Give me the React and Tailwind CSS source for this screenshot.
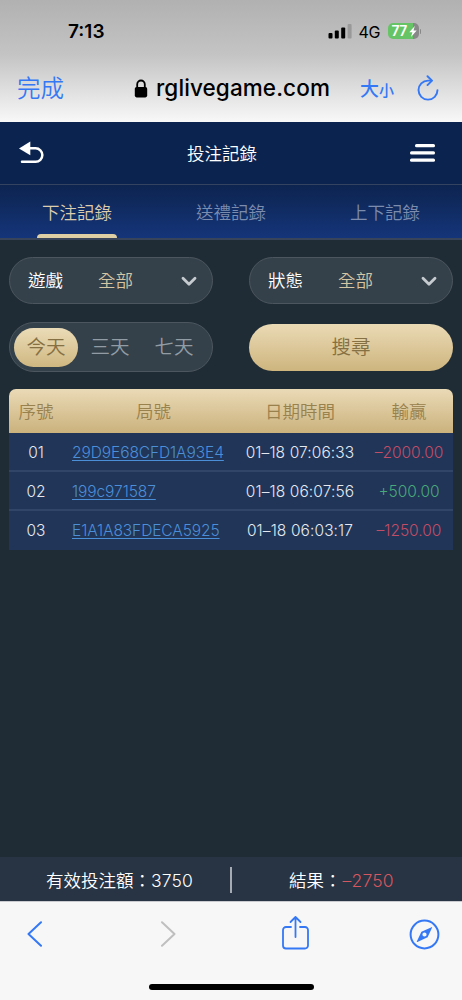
import React, { useState } from "react";

const tabs = ["下注記錄", "送禮記錄", "上下記錄"];
const ranges = ["今天", "三天", "七天"];

const records = [
  { no: "01", round: "29D9E68CFD1A93E4", time: "01–18 07:06:33", amount: "–2000.00", win: false },
  { no: "02", round: "199c971587", time: "01–18 06:07:56", amount: "+500.00", win: true },
  { no: "03", round: "E1A1A83FDECA5925", time: "01–18 06:03:17", amount: "–1250.00", win: false },
];

function StatusBar() {
  return (
    <div className="h-[62px] flex items-center pl-[68px] pr-[41px] text-black">
      <span className="text-[19px] font-semibold leading-none">7:13</span>
      <svg className="ml-auto" width="24" height="16" viewBox="0 0 24 16">
        <rect x="0.5" y="10" width="4" height="5.5" rx="1" />
        <rect x="6.8" y="7.5" width="4" height="8" rx="1" />
        <rect x="13.2" y="4.5" width="4" height="11" rx="1" />
        <rect x="19.6" y="1" width="4" height="14.5" rx="1" fill="#999" />
      </svg>
      <span className="ml-[7px] w-[21px] pt-px whitespace-nowrap text-[16px] tracking-[-0.3px] leading-none">4G</span>
      <div className="ml-[8px] w-[31px] h-[16px] rounded-[5px] overflow-hidden bg-gradient-to-r from-[#67c466] from-80% to-[#888] to-80% flex items-center pl-[4px] text-white">
        <span className="w-[16px] whitespace-nowrap text-[14px] tracking-[-0.5px] font-semibold leading-none">77</span>
        <svg className="ml-px" width="8" height="11" viewBox="0 0 8 11" fill="currentColor">
          <path d="M5.8 0 0.3 6.2H3.4L2 11 7.7 4.6H4.5Z" />
        </svg>
      </div>
      <span className="ml-px w-[1.5px] h-[5px] rounded-r bg-[#888]" />
    </div>
  );
}

function AddressBar() {
  return (
    <div className="h-[60px] flex items-center pl-[17px] pr-[23px] pb-[8px] text-[#3478f6]">
      <span className="w-[47px] pt-[2px] text-[23.5px] font-[350] leading-none">完成</span>
      <svg className="ml-[70px]" width="14" height="19" viewBox="0 0 14 19" fill="none">
        <rect x="0.8" y="8" width="12.4" height="10.4" rx="1.8" fill="#000" />
        <path d="M3.2 9V5.3a3.8 3.8 0 0 1 7.6 0V9" stroke="#000" strokeWidth="1.8" />
      </svg>
      <span className="ml-[8px] w-[174px] pt-px whitespace-nowrap text-[22.5px] font-medium tracking-[0.1px] leading-none text-black">
        rglivegame.com
      </span>
      <span className="ml-[30px] w-[34px] pt-[2px] flex items-baseline whitespace-nowrap font-medium leading-none">
        <span className="text-[19px]">大</span>
        <span className="text-[15px]">小</span>
      </span>
      <svg className="ml-auto" width="22" height="26" viewBox="0 0 22 26" fill="none" stroke="currentColor" strokeWidth="1.9" strokeLinecap="round" strokeLinejoin="round">
        <path d="M14.5 5.6H11A9.5 9.5 0 1 0 20.5 15.1" />
        <path d="M10.5 1.2 15 5.6 10.5 10.1" />
      </svg>
    </div>
  );
}

function Header() {
  return (
    <div className="h-[63px] grid grid-cols-[168px_108px_1fr] items-center pl-[19px] pr-[27px] bg-[#0b244f] border-b border-[#34435f] text-white">
      <svg width="25" height="24" viewBox="0 0 25 24" fill="none">
        <path d="M0 7.6 11.3 0.6V14.3Z" fill="currentColor" />
        <path d="M10 7.3H16.6a6.6 6.6 0 0 1 0 13.5H3" stroke="currentColor" strokeWidth="2.5" strokeLinecap="round" />
      </svg>
      <h1 className="pt-[2px] text-[17.5px] font-[350] leading-none whitespace-nowrap">投注記錄</h1>
      <svg className="justify-self-end" width="25" height="20" viewBox="0 0 25 20" fill="currentColor">
        <rect x="5" y="1" width="20" height="3.2" rx="1.5" />
        <rect x="0" y="8.3" width="25" height="3.2" rx="1.5" />
        <rect x="0" y="15.6" width="25" height="3.2" rx="1.5" />
      </svg>
    </div>
  );
}

function Select({ label, value }) {
  return (
    <button className="w-[204px] h-[47px] pt-px rounded-full border border-[#4b565f] bg-[#35414a] flex items-center pl-[18px] pr-[15px] text-[17.5px] leading-none text-white">
      <span className="font-[350]">{label}</span>
      <span className="ml-[35px] font-[350] text-[#d5c5a3]">{value}</span>
      <svg className="ml-auto" width="16" height="11" viewBox="0 0 16 11" fill="none" stroke="#c6cbd0" strokeWidth="2.8" strokeLinecap="round" strokeLinejoin="round">
        <path d="M2 2.3 8 8.2 14 2.3" />
      </svg>
    </button>
  );
}

function BottomBar() {
  return (
    <div className="h-[99px] flex flex-col items-center bg-[#f7f7f7] border-t border-[#c9cbd0]">
      <div className="w-full h-[64px] flex items-center pl-[27px] pr-[22px] text-[#3478f6]">
        <svg width="16" height="26" viewBox="0 0 16 26" fill="none" stroke="currentColor" strokeWidth="2" strokeLinecap="round" strokeLinejoin="round">
          <path d="M14 1.2 1.5 13 14 24.8" />
        </svg>
        <svg className="ml-[117px]" width="16" height="26" viewBox="0 0 16 26" fill="none" stroke="#bfbfbf" strokeWidth="2" strokeLinecap="round" strokeLinejoin="round">
          <path d="M2 1.2 14.5 13 2 24.8" />
        </svg>
        <svg className="ml-[105px] mb-[3px]" width="29" height="35" viewBox="0 0 28 35" fill="none" stroke="currentColor" strokeWidth="1.8" strokeLinecap="round" strokeLinejoin="round">
          <path d="M9.5 12H4.5a3 3 0 0 0-3 3V30.5a3 3 0 0 0 3 3H23.5a3 3 0 0 0 3-3V15a3 3 0 0 0-3-3H18.5" />
          <path d="M14 22V2M9 7 14 2 19 7" />
        </svg>
        <svg className="ml-auto" width="31" height="31" viewBox="0 0 31 31" fill="none">
          <circle cx="15.5" cy="15.5" r="13.9" stroke="currentColor" strokeWidth="2" />
          <path fillRule="evenodd" d="M22.6 8.2Q23.5 7.8 23 8.8L18.6 18.2 8.4 22.9Q7.4 23.3 7.9 22.3L12.4 12.8ZM15.5 13.4a2.1 2.1 0 1 0 0 4.2 2.1 2.1 0 0 0 0-4.2Z" fill="currentColor" />
        </svg>
      </div>
      <div className="mt-[18px] w-[165px] h-[6px] rounded-full bg-black" />
    </div>
  );
}

export default function App() {
  const [tab, setTab] = useState(0);
  const [range, setRange] = useState(0);

  return (
    <div className="w-[462px] h-[1000px] flex flex-col overflow-hidden bg-[#202c35] font-[Inter,'Noto_Sans_CJK_TC',sans-serif]">
      <div className="h-[122px] bg-gradient-to-b from-[#b1b1b1] via-[#c4c4c4] via-45% to-[#f8f8f8]">
        <StatusBar />
        <AddressBar />
      </div>

      <Header />

      {/* Tabs */}
      <div className="h-[55px] grid grid-cols-3 bg-gradient-to-b from-[#0d2450] to-[#15357a] border-b-2 border-[#38445a]">
        {tabs.map((name, i) => (
          <button
            key={name}
            onClick={() => setTab(i)}
            className={`flex flex-col items-center justify-between pt-[19px] text-[17.5px] leading-none font-[350] ${i === tab ? "text-[#dccdae]" : "text-[#7b8caf]"}`}
          >
            <span>{name}</span>
            {i === tab && <span className="w-[80px] h-[4px] rounded-t bg-[#dfcfa4]" />}
          </button>
        ))}
      </div>

      {/* Filters */}
      <div className="px-[9px] pt-[17px]">
        <div className="flex justify-between">
          <Select label="遊戲" value="全部" />
          <Select label="狀態" value="全部" />
        </div>
        <div className="mt-[18px] flex items-center justify-between">
          <div className="w-[204px] h-[50px] px-[4px] flex items-center rounded-full border border-[#4b565f] bg-[#35414a]">
            {ranges.map((name, i) => (
              <button
                key={name}
                onClick={() => setRange(i)}
                className={`w-[64px] h-[39px] pt-px rounded-full text-[19.5px] leading-none font-[350] ${i === range ? "bg-gradient-to-b from-[#ebdcb8] to-[#cfb780] text-[#857043]" : "text-[#929ca5]"}`}
              >
                {name}
              </button>
            ))}
          </div>
          <button className="w-[204px] h-[47px] pt-px rounded-full bg-gradient-to-b from-[#eadab5] to-[#ceb57e] text-[19.5px] leading-none font-[350] text-[#857043]">
            搜尋
          </button>
        </div>
      </div>

      {/* Records */}
      <div className="mx-[9px] mt-[17px] rounded-t-[7px] overflow-hidden">
        <div className="h-[44px] pt-px grid grid-cols-[54px_181px_112px_1fr] items-center justify-items-center bg-gradient-to-b from-[#eadab6] to-[#cbb27d] text-[17.5px] leading-none font-[350] text-[#98814d]">
          <span>序號</span>
          <span>局號</span>
          <span>日期時間</span>
          <span className="pl-[9px]">輸贏</span>
        </div>
        {records.map((r) => (
          <div
            key={r.no}
            className="h-[39px] pt-[2px] grid grid-cols-[54px_181px_112px_1fr] items-center justify-items-center bg-[#203558] border-b-2 border-[#304568] last:border-b-0 last:pt-0 text-[15.5px] leading-none font-light text-[#e4e9f1] whitespace-nowrap"
          >
            <span>{r.no}</span>
            <a href="#" className="justify-self-start ml-[9px] text-[#4c8fd9] underline underline-offset-[2px] tracking-[-0.08px]">
              {r.round}
            </a>
            <span className="tracking-[0.1px]">{r.time}</span>
            <span className={`pl-[9px] ${r.win ? "text-[#49a978]" : "text-[#c24d66]"}`}>{r.amount}</span>
          </div>
        ))}
      </div>

      {/* Totals */}
      <div className="mt-auto h-[44px] pt-px shrink-0 grid grid-cols-[232px_1fr] items-center bg-[#283343] text-[17.5px] leading-none font-[350] text-white">
        <div className="h-[26px] pt-[2px] flex items-center pl-[46px] border-r-2 border-[#a6abb3] whitespace-nowrap">
          有效投注額：<span className="font-light tracking-[0.15px]">3750</span>
        </div>
        <div className="pt-[2px] flex items-center pl-[57px] whitespace-nowrap">
          結果：<span className="ml-px font-light tracking-[0.2px] text-[#d6575f]">–2750</span>
        </div>
      </div>

      <BottomBar />
    </div>
  );
}
